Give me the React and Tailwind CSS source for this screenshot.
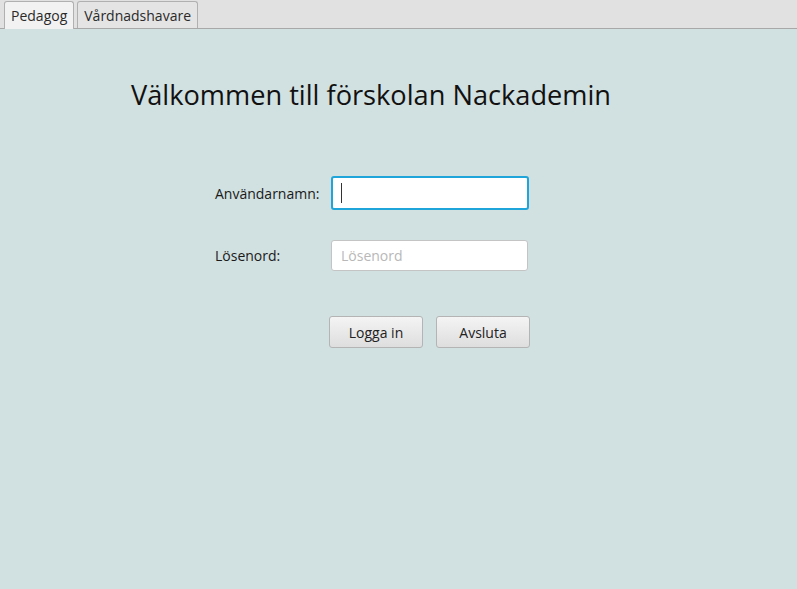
import React from 'react';

const font = { fontFamily: '"Open Sans", "Noto Sans", sans-serif' };

export default function App() {
  return (
    <div className="min-h-screen h-[589px] bg-[#d1e0e0] flex flex-col text-[#1a1a1a]" style={font}>
      {/* tab header */}
      <div className="h-[29px] bg-[#e1e1e1] border-b border-[#a8a8a8] flex items-end pl-[4px] gap-[3px]">
        <div className="h-[28px] -mb-px px-[6px] bg-[#f2f2f2] border border-b-0 border-[#b0b0b0] rounded-t-[3px] flex items-center text-[14px] text-[#2a2a2a]">
          Pedagog
        </div>
        <div className="h-[27px] px-[6px] bg-[#e4e4e4] border border-b-0 border-[#b0b0b0] rounded-t-[3px] flex items-center text-[14px] text-[#2a2a2a]">
          Vårdnadshavare
        </div>
      </div>

      {/* title */}
      <div className="pl-[131px] pt-[49px]">
        <h1 className="text-[27.2px] leading-[34px] text-[#111]">Välkommen till förskolan Nackademin</h1>
      </div>

      {/* form */}
      <div className="pl-[215px] pt-[64px] flex flex-col">
        <div className="flex items-center">
          <label className="w-[116px] text-[14px]">Användarnamn:</label>
          <div className="w-[198px] h-[34px] rounded-[3px] border-2 border-[#1fa5d9] bg-white flex items-center pl-[8px]">
            <div className="w-px h-[20px] bg-[#333]" />
          </div>
        </div>
        <div className="flex items-center mt-[30px]">
          <label className="w-[116px] text-[14px]">Lösenord:</label>
          <input
            type="password"
            placeholder="Lösenord"
            className="w-[197px] h-[31px] rounded-[3px] border border-[#c4c4c4] bg-white px-[9px] text-[14px] placeholder:text-[#b8b8b8] outline-none"
          />
        </div>
        <div className="flex mt-[45px] ml-[114px] gap-[13px]">
          <button className="w-[94px] h-[32px] rounded-[3px] border border-[#b4b4b4] bg-gradient-to-b from-[#f4f4f4] to-[#dedede] text-[14px] text-[#222]">
            Logga in
          </button>
          <button className="w-[94px] h-[32px] rounded-[3px] border border-[#b4b4b4] bg-gradient-to-b from-[#f4f4f4] to-[#dedede] text-[14px] text-[#222]">
            Avsluta
          </button>
        </div>
      </div>
    </div>
  );
}
